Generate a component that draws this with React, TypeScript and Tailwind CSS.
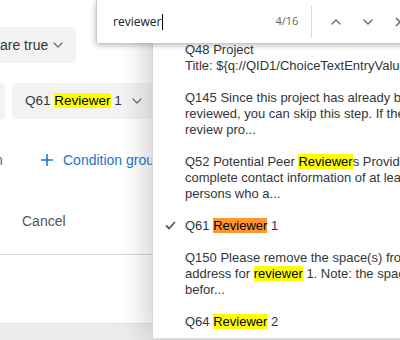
import React from 'react';

const Chevron = ({ className = '' }: { className?: string }) => (
  <svg width="10" height="6" viewBox="0 0 10 6" className={className} fill="none">
    <path d="M1 1l4 4 4-4" stroke="currentColor" strokeWidth="1.2" strokeLinecap="round" strokeLinejoin="round" />
  </svg>
);

const Mark = ({ children, active = false }: { children: React.ReactNode; active?: boolean }) => (
  <span className={active ? 'bg-[#ff9632] text-black' : 'bg-[#ffff00] text-black'}>{children}</span>
);

interface Item {
  lines: React.ReactNode[];
  checked?: boolean;
}

const items: Item[] = [
  { lines: ['Q48 Project', 'Title: ${q://QID1/ChoiceTextEntryValue}'] },
  {
    lines: [
      'Q145 Since this project has already been',
      'reviewed, you can skip this step. If the',
      'review pro...',
    ],
  },
  {
    lines: [
      <>Q52 Potential Peer <Mark>Reviewer</Mark>s Provide</>,
      'complete contact information of at least',
      'persons who a...',
    ],
  },
  { lines: [<>Q61 <Mark active>Reviewer</Mark> 1</>], checked: true },
  {
    lines: [
      'Q150 Please remove the space(s) from',
      <>address for <Mark>reviewer</Mark> 1. Note: the space</>,
      'befor...',
    ],
  },
  { lines: [<>Q64 <Mark>Reviewer</Mark> 2</>] },
];

export default function App() {
  return (
    <div className="relative w-[400px] h-[340px] overflow-hidden bg-white font-['Liberation_Sans',Arial,sans-serif] text-[#32363a]">
      {/* Page behind */}
      <div className="flex flex-col h-full">
        <div className="pt-[27px] flex">
          <div className="h-[36px] w-[76px] rounded-r-[4px] bg-[#f3f3f3] flex items-center text-[14px] pr-[13px]">
            <span className="flex-1">are true</span>
            <Chevron className="text-[#6a6d70]" />
          </div>
        </div>
        <div className="mt-[20px] flex gap-[7px]">
          <div className="h-[36px] w-[5px] rounded-r-[4px] bg-[#f3f3f3]" />
          <div className="h-[36px] w-[180px] rounded-[4px] bg-[#f3f3f3] flex items-center pl-[13px] text-[13.5px]">
            <span>Q61 <Mark>Reviewer</Mark> 1</span>
            <Chevron className="ml-[10px] text-[#6a6d70]" />
          </div>
        </div>
        <div className="mt-[31px] flex items-center text-[14px] text-[#1f75cb] h-[20px]">
          <span className="w-[41px] overflow-hidden">
            <span className="block -ml-[5px]">n</span>
          </span>
          <svg width="12" height="12" viewBox="0 0 12 12" className="mr-[10px]">
            <path d="M6 0v12M0 6h12" stroke="currentColor" strokeWidth="1.6" />
          </svg>
          <span className="whitespace-nowrap">Condition group</span>
        </div>
        <div className="mt-[41px] pl-[22px] text-[14px] text-[#525659] h-[20px] leading-[20px]">Cancel</div>
        <div className="mt-[23px] h-px bg-[#d6d6d6]" />
        <div className="flex-1" />
        <div className="h-[17px] bg-[#ececec] border-t border-[#e2e2e2]" />
      </div>

      {/* Dropdown menu */}
      <div className="absolute left-[152px] top-0 w-[300px] h-[338px] bg-white border-l border-[#d4d4d4] shadow-[-8px_0_26px_rgba(0,0,0,0.17)] pt-[34px] text-[13px] leading-[16px] text-[#32363a]">
        {items.map((it, i) => (
          <div key={i} className="relative py-2 pl-[32px] whitespace-nowrap">
            {it.checked && (
              <svg width="11" height="9" viewBox="0 0 11 9" className="absolute left-[12px] top-[11px]">
                <path d="M1 4.5l3 3L10 1" stroke="#5a5a5a" strokeWidth="1.8" fill="none" />
              </svg>
            )}
            {it.lines.map((l, j) => (
              <div key={j}>{l}</div>
            ))}
          </div>
        ))}
      </div>

      {/* Browser find bar */}
      <div className="absolute left-[96px] top-0 w-[320px] h-[43px] bg-white border-l border-[#c8c8c8] shadow-[0_2px_6px_rgba(0,0,0,0.3)] flex items-center font-['Open_Sans',sans-serif] text-[12px]">
        <div className="w-[179px] pl-[16px] flex items-center text-[#202124]">
          <span>reviewer</span>
          <span className="w-px h-[16px] bg-black ml-px" />
        </div>
        <span className="w-[18px] text-[#5f6368] text-[11px] whitespace-nowrap">4/16</span>
        <div className="ml-[18px] w-px h-[32px] bg-[#dadce0]" />
        <div className="ml-[8px] w-[32px] flex justify-center text-[#5f6368]">
          <Chevron className="rotate-180" />
        </div>
        <div className="w-[32px] flex justify-center text-[#5f6368]">
          <Chevron />
        </div>
        <div className="w-[32px] flex justify-center text-[#5f6368]">
          <svg width="10" height="10" viewBox="0 0 10 10">
            <path d="M1 1l8 8M9 1L1 9" stroke="currentColor" strokeWidth="1.4" />
          </svg>
        </div>
      </div>
    </div>
  );
}
